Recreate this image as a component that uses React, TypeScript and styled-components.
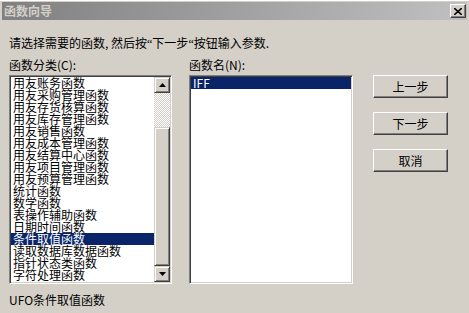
import styled, { createGlobalStyle } from 'styled-components';

const categories = [
  '用友账务函数',
  '用友采购管理函数',
  '用友存货核算函数',
  '用友库存管理函数',
  '用友销售函数',
  '用友成本管理函数',
  '用友结算中心函数',
  '用友项目管理函数',
  '用友预算管理函数',
  '统计函数',
  '数学函数',
  '表操作辅助函数',
  '日期时间函数',
  '条件取值函数',
  '读取数据库数据函数',
  '指针状态类函数',
  '字符处理函数',
];

const functions = ['IFF'];

const GlobalStyle = createGlobalStyle`
  html, body {
    margin: 0;
    padding: 0;
    background: #d4d0c8;
  }
  body {
    font-family: "Noto Sans CJK SC", "Noto Sans", sans-serif;
    font-size: 12px;
    color: #000;
  }
`;

function Arrow({ up }: { up?: boolean }) {
  return (
    <svg width="7" height="4" viewBox="0 0 7 4">
      <polygon
        points={up ? '3.5,0 7,4 0,4' : '0,0 7,0 3.5,4'}
        fill="#000"
      />
    </svg>
  );
}

export default function App() {
  return (
    <>
      <GlobalStyle />
      <Window>
        <TitleBar>
          <TitleText>函数向导</TitleText>
          <CloseButton>
            <svg width="8" height="7" viewBox="0 0 8 7">
              <path d="M0 0 L8 7 M8 0 L0 7" stroke="#000" strokeWidth="1.6" />
            </svg>
          </CloseButton>
        </TitleBar>
        <Instruction>
          请选择需要的函数, 然后按<Quote>“</Quote>下一步<Quote>“</Quote>按钮输入参数.
        </Instruction>
        <Main>
          <Column>
            <Label>函数分类(C):</Label>
            <ListBox width={163}>
              <ListItems>
                {categories.map(c => (
                  <ListItem key={c} selected={c === '条件取值函数'}>
                    {c}
                  </ListItem>
                ))}
              </ListItems>
              <ScrollBar>
                <ScrollButton>
                  <Arrow up />
                </ScrollButton>
                <Track />
                <Thumb />
                <ScrollButton>
                  <Arrow />
                </ScrollButton>
              </ScrollBar>
            </ListBox>
          </Column>
          <Column>
            <Label>函数名(N):</Label>
            <ListBox width={164}>
              <ListItems>
                {functions.map(f => (
                  <ListItem key={f} selected>
                    {f}
                  </ListItem>
                ))}
              </ListItems>
            </ListBox>
          </Column>
          <ButtonColumn>
            <Button>上一步</Button>
            <Button>下一步</Button>
            <Button>取消</Button>
          </ButtonColumn>
        </Main>
        <Status>UFO条件取值函数</Status>
      </Window>
    </>
  );
}

const Window = styled.div`
  width: 469px;
  height: 313px;
  background: #d4d0c8;
  border-top: 1px solid #ffffff;
  box-sizing: border-box;
  display: flex;
  flex-direction: column;
  overflow: hidden;
`;

const TitleBar = styled.div`
  height: 18px;
  margin: 1px 2px 0 2px;
  background: linear-gradient(to right, #808080, #c0c0c0);
  display: flex;
  align-items: center;
  justify-content: space-between;
  padding: 0 1px 0 2px;
`;

const TitleText = styled.span`
  color: #d4d0c8;
  font-weight: bold;
  font-size: 12px;
  line-height: 18px;
`;

const CloseButton = styled.div`
  width: 16px;
  height: 14px;
  box-sizing: border-box;
  background: #d4d0c8;
  border-top: 1px solid #ffffff;
  border-left: 1px solid #ffffff;
  border-right: 1px solid #404040;
  border-bottom: 1px solid #404040;
  box-shadow: inset -1px -1px 0 #808080;
  display: flex;
  align-items: center;
  justify-content: center;
`;

const Instruction = styled.div`
  margin: 17px 0 0 9px;
  line-height: 12px;
  height: 12px;
  white-space: nowrap;
`;

const Quote = styled.span`
  font-family: "Liberation Serif", serif;
`;

const Main = styled.div`
  display: flex;
  margin: 10px 0 0 9px;
  gap: 17px;
`;

const Column = styled.div`
  display: flex;
  flex-direction: column;
`;

const Label = styled.div`
  line-height: 12px;
  height: 12px;
  margin-bottom: 4px;
  white-space: nowrap;
`;

const ListBox = styled.div<{ width: number }>`
  width: ${p => p.width}px;
  height: 209px;
  box-sizing: border-box;
  background: #ffffff;
  border-top: 1px solid #808080;
  border-left: 1px solid #808080;
  border-right: 1px solid #ffffff;
  border-bottom: 1px solid #ffffff;
  box-shadow: inset 1px 1px 0 #404040, inset -1px -1px 0 #d4d0c8;
  padding: 1px;
  display: flex;
`;

const ListItems = styled.div`
  flex: 1;
  min-width: 0;
  overflow: hidden;
`;

const ListItem = styled.div<{ selected?: boolean }>`
  height: 12px;
  line-height: 12px;
  padding-left: 2px;
  white-space: nowrap;
  background: ${p => (p.selected ? '#0a246a' : 'transparent')};
  color: ${p => (p.selected ? '#ffffff' : '#000000')};
`;

const ScrollBar = styled.div`
  width: 16px;
  display: flex;
  flex-direction: column;
`;

const ScrollButton = styled.div`
  height: 16px;
  box-sizing: border-box;
  background: #d4d0c8;
  border-top: 1px solid #d4d0c8;
  border-left: 1px solid #d4d0c8;
  border-right: 1px solid #404040;
  border-bottom: 1px solid #404040;
  box-shadow: inset 1px 1px 0 #ffffff, inset -1px -1px 0 #808080;
  display: flex;
  align-items: center;
  justify-content: center;
`;

const Track = styled.div`
  height: 34px;
  background: repeating-conic-gradient(#ffffff 0 25%, #d4d0c8 0 50%) 0 0 / 2px 2px;
`;

const Thumb = styled.div`
  flex: 1;
  box-sizing: border-box;
  background: #d4d0c8;
  border-top: 1px solid #d4d0c8;
  border-left: 1px solid #d4d0c8;
  border-right: 1px solid #404040;
  border-bottom: 1px solid #404040;
  box-shadow: inset 1px 1px 0 #ffffff, inset -1px -1px 0 #808080;
`;

const ButtonColumn = styled.div`
  display: flex;
  flex-direction: column;
  gap: 14px;
  margin-left: 3px;
  margin-top: 16px;
`;

const Button = styled.div`
  width: 75px;
  height: 23px;
  box-sizing: border-box;
  background: #d4d0c8;
  border-top: 1px solid #ffffff;
  border-left: 1px solid #ffffff;
  border-right: 1px solid #404040;
  border-bottom: 1px solid #404040;
  box-shadow: inset -1px -1px 0 #808080;
  display: flex;
  align-items: center;
  justify-content: center;
  font-size: 12px;
`;

const Status = styled.div`
  margin: 10px 0 0 9px;
  line-height: 12px;
  height: 12px;
  white-space: nowrap;
`;
